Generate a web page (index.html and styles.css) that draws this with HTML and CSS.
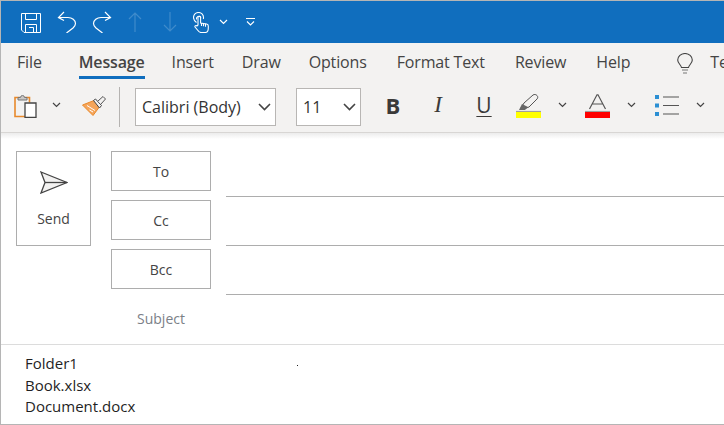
FILE: index.html
```html
<!DOCTYPE html>
<html>

<head>
	<title>Message</title>
	<link rel="stylesheet" href="styles.css">
</head>

<body>
	<div class="window">
		<div class="titlebar">
			<svg class="qat-save" width="20" height="20" viewBox="0 0 20 20" fill="none" stroke="#fff" stroke-width="1"><path d="M.5.5h19v19H3L.5 17z"/><path d="M4.500.5v6h11v-6M4.500 19.500v-8h11v8M8 14.500h4.500v5"/></svg>
			<svg class="qat-undo" width="20" height="22" viewBox="0 0 20 22" fill="none" stroke="#fff" stroke-width="1.2"><path d="M7 1 1.500 6.500 7 9.500M1.500 6.500H11c4 0 7.500 2.500 7.500 6 0 2-1 3-2.500 4.500L9.500 22"/></svg>
			<svg class="qat-redo" width="20" height="22" viewBox="0 0 20 22" fill="none" stroke="#fff" stroke-width="1.2"><path d="M13 1l5.500 5.500L13 9.500M18.500 6.500H9c-4 0-7.500 2.500-7.500 6 0 2 1 3 2.500 4.500l6.500 5"/></svg>
			<svg class="qat-up" width="14" height="20" viewBox="0 0 14 20" fill="none" stroke="#3f8bcb" stroke-width="1.200"><path d="M1 7l6-6 6 6M7 1v19"/></svg>
			<svg class="qat-down" width="14" height="20" viewBox="0 0 14 20" fill="none" stroke="#3f8bcb" stroke-width="1.200"><path d="M1 13l6 6 6-6M7 19V0"/></svg>
			<svg class="qat-touch" width="16" height="21" viewBox="0 0 16 21" fill="none" stroke="#fff" stroke-width="1.100"><path d="M3.500 10.500C1.500 9 .5 7.500.5 5.500a5 5 0 0 1 10 0c0 .5 0 1-.2 1.500"/><path d="M3.500 7.500a2.500 2.500 0 0 1 4.500-2"/><path d="M5 13V5.500a1.300 1.300 0 0 1 2.600 0V11l6 1c1 .2 1.700 1 1.700 2v2c0 2-1 4.500-3 4.500H8c-1.500 0-2.500-1-3.500-2.500L2 15c-.5-1 1-2 2-1z"/><path d="M8.500 11v3M10.500 11.300v3M12.500 11.700v3"/></svg>
			<svg class="qat-chevron" width="9" height="6" viewBox="0 0 9 6" fill="none" stroke="#fff" stroke-width="1.200"><path d="M1 1l3.500 3.500L8 1"/></svg>
			<svg class="qat-custom" width="9" height="8" viewBox="0 0 9 8" fill="none" stroke="#fff" stroke-width="1.100"><path d="M0 .5h9M1 3.500l3.500 3.500L8 3.500"/></svg>
		</div>

		<div class="tabs">
			<span class="tab">File</span>
			<span class="tab tab-active">Message</span>
			<span class="tab">Insert</span>
			<span class="tab tab-draw">Draw</span>
			<span class="tab tab-options">Options</span>
			<span class="tab tab-format">Format Text</span>
			<span class="tab tab-review">Review</span>
			<span class="tab tab-help">Help</span>
			<svg class="bulb" width="16" height="21" viewBox="0 0 16 21" fill="none" stroke="#444" stroke-width="1.100"><path d="M4.500 14.500C4 11.500.7 10.500.7 7a7.300 6.500 0 0 1 14.600 0c0 3.500-3.300 4.500-3.800 7.500z"/><path d="M5 17h6M6 20h4" stroke="#777"/></svg>
			<span class="tab tab-cut">Te</span>
		</div>

		<div class="ribbon">
			<svg class="ic-paste" width="23" height="23" viewBox="0 0 23 23" fill="none"><path d="M6 2.500H1v19h13" stroke="#e8892b" stroke-width="1.600"/><path d="M11 2.500h4.500v5" stroke="#e8892b" stroke-width="1.600"/><path d="M4 5V2.500h2.500a2 2 0 0 1 4 0H13V5z" fill="#c8c6c4" stroke="#777"/><path d="M11 8h11v14.500H11z" fill="#fff" stroke="#444" stroke-width="1.300"/></svg>
			<svg class="chev ic-paste-chev" width="9" height="6" viewBox="0 0 9 6"><path d="M1 1l3.500 3.500L8 1"/></svg>
			<svg class="ic-brush" width="24" height="20" viewBox="0 0 24 20" fill="none"><path d="M.5 9 12 4.500l5 7L11 19.500z" fill="#f5a55a" stroke="#e8892b"/><path d="M5 9.500l8 5M7.500 14l3.500 2" stroke="#fff"/><path d="M11.500 4.500l6 7.500 2-2.500-6-6.500z" fill="#f3f2f1" stroke="#444"/><path d="M16 5l5-4.500 2.500 2.500-4.500 5" fill="#f3f2f1" stroke="#555"/></svg>
			<div class="ribbon-sep"></div>
			<div class="select select-font">
				<span>Calibri (Body)</span>
				<svg class="select-chev" width="13" height="8" viewBox="0 0 13 8"><path d="M1 1l5.500 5.500L12 1"/></svg>
			</div>
			<div class="select select-size">
				<span>11</span>
				<svg class="select-chev" width="13" height="8" viewBox="0 0 13 8"><path d="M1 1l5.500 5.500L12 1"/></svg>
			</div>
			<span class="fmt fmt-b">B</span>
			<span class="fmt fmt-i">I</span>
			<span class="fmt fmt-u">U</span>
			<div class="swatch-btn swatch-highlight">
				<svg width="25" height="18" viewBox="0 0 25 18" fill="none"><path d="M5 14l3-5 9-8c1.500-1 3-.5 4 .5s1 2.500 0 3.500l-8 8-4 1.500z" fill="#f3f2f1" stroke="#555"/><path d="M3 16l3-6 6 3-3 3z" fill="#666"/><path d="M0 17.500h25" stroke="#a19f9d" stroke-width="1.200"/></svg>
				<div class="swatch swatch-yellow"></div>
			</div>
			<svg class="chev ic-highlight-chev" width="9" height="6" viewBox="0 0 9 6"><path d="M1 1l3.500 3.500L8 1"/></svg>
			<div class="swatch-btn swatch-color">
				<svg width="25" height="18" viewBox="0 0 25 18" fill="none"><path d="M4.500 15 12 .8h1L20.500 15M7.500 10h10" stroke="#555" stroke-width="1.200"/><path d="M0 17.500h25" stroke="#a19f9d" stroke-width="1.200"/></svg>
				<div class="swatch swatch-red"></div>
			</div>
			<svg class="chev ic-color-chev" width="9" height="6" viewBox="0 0 9 6"><path d="M1 1l3.500 3.500L8 1"/></svg>
			<svg class="ic-list" width="24" height="21" viewBox="0 0 24 21" fill="none"><path d="M0 0h4v4H0zM0 8.500h4v4H0zM0 17h4v4H0z" fill="#2b8fd3"/><path d="M8 2h16M8 10.500h16M8 19h16" stroke="#555" stroke-width="1.200"/></svg>
			<svg class="chev ic-list-chev" width="9" height="6" viewBox="0 0 9 6"><path d="M1 1l3.500 3.500L8 1"/></svg>
		</div>

		<div class="compose">
			<div class="send">
				<svg width="28" height="23" viewBox="0 0 28 23" fill="#f3f2f1" stroke="#444" stroke-width="1.300"><path d="M1 1l26 10.500L1 22l4-10.500z"/><path d="M5 11.500h22" fill="none"/></svg>
				<span>Send</span>
			</div>
			<div class="fields">
				<div class="field">
					<div class="addr-btn">To</div>
					<div class="addr-line"></div>
				</div>
				<div class="field">
					<div class="addr-btn">Cc</div>
					<div class="addr-line"></div>
				</div>
				<div class="field">
					<div class="addr-btn">Bcc</div>
					<div class="addr-line"></div>
				</div>
				<div class="subject">Subject</div>
			</div>
		</div>

		<div class="attachments">
			<div>Folder1</div>
			<div>Book.xlsx</div>
			<div>Document.docx</div>
			<i class="speck"></i>
		</div>
	</div>
</body>

</html>
```

FILE: styles.css
```css
html, body { margin: 0; padding: 0; background: #fff; }
body { width: 724px; height: 425px; overflow: hidden; font-family: "Open Sans", "Noto Sans", sans-serif; color: #444; }

.window { position: relative; height: 425px; box-sizing: border-box; border-top: 1px solid #b5b5b5; border-left: 1px solid #b5b5b5; border-bottom: 1px solid #b5b5b5; overflow: hidden; }

/* title bar */
.titlebar { display: flex; align-items: center; height: 42px; background: #106ebe; padding-left: 20px; }
.titlebar svg { flex: none; }
.qat-save { margin-top: 1px; }
.qat-undo { margin-left: 16px; }
.qat-redo { margin-left: 15px; }
.qat-up { margin-left: 16px; }
.qat-down { margin-left: 21px; }
.qat-touch { margin-left: 16px; }
.qat-chevron { margin-left: 10px; margin-bottom: 1px; }
.qat-custom { margin-left: 18px; }

/* tabs */
.tabs { display: flex; align-items: flex-start; gap: 27px; height: 42px; padding-left: 16px; background: #f3f2f1; font-size: 16px; white-space: nowrap; }
.tab { flex: none; height: 36px; line-height: 38px; letter-spacing: -.15px; }
.tab-active { position: relative; margin-left: 10px; font-weight: 600; }
.tab-active:after { content: ""; position: absolute; left: 0; right: 0; bottom: 0; height: 3px; background: #106ebe; }
.tab-draw { margin-left: 1px; }
.tab-options { margin-left: 1px; }
.tab-format { margin-left: 3px; }
.tab-review { margin-left: 3px; }
.tab-help { margin-left: 3px; }
.bulb { flex: none; margin: 10px 0 0 20px; }
.tab-cut { margin-left: -10px; }

/* ribbon */
.ribbon { display: flex; align-items: center; height: 44px; padding: 0 0 3px 13px; background: #f3f2f1; border-bottom: 1px solid #d8d6d4; }
.ribbon > * { flex: none; }
.chev { fill: none; stroke: #444; stroke-width: 1.2; margin-bottom: 4px; }
.ic-paste { margin-bottom: 2px; }
.ic-paste-chev { margin-left: 15px; }
.ic-brush { margin-left: 21px; margin-bottom: 2px; }
.ribbon-sep { width: 1px; height: 40px; margin-left: 13px; background: #b5b3b1; }
.select { display: flex; align-items: center; justify-content: space-between; box-sizing: border-box; height: 38px; padding: 0 1px 0 6px; background: #fff; border: 1px solid #b8b6b4; font-size: 16px; color: #333; }
.select-font { width: 141px; margin-left: 15px; }
.select-size { width: 65px; margin-left: 20px; }
.select-chev { margin-right: 3px; fill: none; stroke: #444; stroke-width: 1.6; }
.fmt { display: block; text-align: center; color: #3b3a39; margin-bottom: 4px; }
.fmt-b { width: 16px; margin-left: 24px; font-size: 22px; font-weight: 700; }
.fmt-i { width: 14px; margin-left: 30px; font-family: "Liberation Serif", serif; font-size: 23px; font-style: italic; }
.fmt-u { width: 16px; margin-left: 31px; font-size: 21px; text-decoration: underline; text-decoration-thickness: 1px; text-underline-offset: 3px; }
.swatch-btn { width: 25px; margin-bottom: 2px; }
.swatch-btn svg { display: block; }
.swatch { height: 6px; }
.swatch-yellow { background: #ff0; }
.swatch-red { background: #f00; }
.swatch-highlight { margin-left: 24px; }
.ic-highlight-chev { margin-left: 17px; }
.swatch-color { margin-left: 18px; }
.ic-color-chev { margin-left: 17px; }
.ic-list { margin-left: 19px; margin-bottom: 4px; }
.ic-list-chev { margin-left: 17px; }

/* compose form */
.compose { display: flex; align-items: flex-start; height: 212px; padding: 18px 0 0 15px; box-sizing: border-box; border-bottom: 1px solid #dcdcdc; background: linear-gradient(#ececec, #fff 6px); }
.send { display: flex; flex-direction: column; align-items: center; box-sizing: border-box; width: 75px; height: 95px; padding-top: 19px; border: 1px solid #adadad; font-size: 14px; background: #fff; }
.send span { margin-top: 15px; }
.fields { flex: 1; margin-left: 20px; }
.field { display: flex; height: 49px; }
.addr-btn { box-sizing: border-box; width: 100px; height: 40px; line-height: 39px; text-align: center; border: 1px solid #adadad; font-size: 14px; background: #fff; }
.addr-line { flex: 1; height: 1px; margin: 45px 0 0 15px; background: #adadad; }
.subject { width: 100px; margin-top: 11px; text-align: center; font-size: 14px; color: #7b8087; }

/* attached items */
.attachments { position: relative; padding: 8px 0 0 24px; font-size: 15px; line-height: 21.500px; color: #1f1f1f; }
.speck { position: absolute; left: 296px; top: 20px; width: 1px; height: 1px; background: #222; }
```
